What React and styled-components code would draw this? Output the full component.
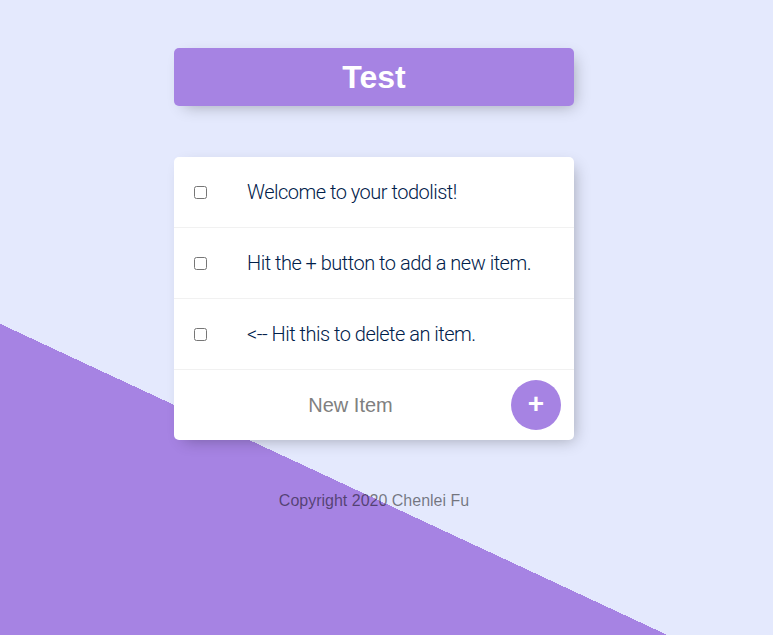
import styled, { createGlobalStyle } from "styled-components";

const GlobalStyle = createGlobalStyle`
  html {
    background-color: #E4E9FD;
    background-image: linear-gradient(25deg, #A683E3 50%, #E4E9FD 50%);
    min-height: 1008px;
    overflow: hidden;
    font-family: "Liberation Sans", Arial, sans-serif;
  }
  body {
    margin: 0;
  }
`;

const Page = styled.div`
  width: 748px;
  padding-top: 48px;
`;

const Box = styled.div`
  max-width: 400px;
  margin: 0 auto 51px;
  background: ${(p) => (p.$heading ? "#A683E3" : "#fff")};
  text-align: ${(p) => (p.$heading ? "center" : "left")};
  border-radius: 5px;
  box-shadow: 5px 5px 15px -5px rgba(0, 0, 0, 0.3);
`;

const Title = styled.h1`
  margin: 0;
  padding: 10px;
  color: #fff;
  font-size: 32px;
  line-height: 38px;
  font-weight: 700;
`;

const Item = styled.div`
  min-height: 70px;
  display: flex;
  align-items: center;
  border-bottom: 1px solid #F1F1F1;
`;

const Check = styled.input`
  margin: 20px;
  width: 13px;
  height: 13px;
`;

const Text = styled.p`
  margin: 0;
  padding: 20px;
  font-family: Roboto, "Liberation Sans", sans-serif;
  font-size: 20px;
  font-weight: 300;
  letter-spacing: -0.5px;
  color: #00204a;
`;

const Form = styled.form`
  display: flex;
  align-items: center;
  height: 70px;
  margin-left: 20px;
  gap: 4px;
`;

const NewItem = styled.input`
  text-align: center;
  height: 60px;
  width: 313px;
  padding: 0;
  border: none;
  background: transparent;
  font-family: "Liberation Sans", Arial, sans-serif;
  font-size: 20px;
  &::placeholder {
    color: grey;
    opacity: 1;
  }
  &:focus {
    outline: none;
    box-shadow: inset 0 -3px 0 0 #A683E3;
  }
`;

const AddButton = styled.button`
  display: flex;
  align-items: center;
  justify-content: center;
  height: 50px;
  width: 50px;
  border-radius: 50%;
  border: 0;
  padding: 0 0 2px;
  background-color: #A683E3;
  color: #fff;
  font-family: "Liberation Sans", Arial, sans-serif;
  font-size: 28px;
  font-weight: 700;
  line-height: 1;
  cursor: pointer;
`;

const Footer = styled.footer`
  text-align: center;
  color: rgba(0, 0, 0, 0.5);
  font-size: 16px;
  line-height: 18px;
  padding-top: 1px;
`;

const items = [
  "Welcome to your todolist!",
  "Hit the + button to add a new item.",
  "<-- Hit this to delete an item.",
];

export default function App() {
  return (
    <>
      <GlobalStyle />
      <Page>
        <Box $heading>
          <Title>Test</Title>
        </Box>
        <Box>
          {items.map((text) => (
            <Item key={text}>
              <Check type="checkbox" />
              <Text>{text}</Text>
            </Item>
          ))}
          <Form onSubmit={(e) => e.preventDefault()}>
            <NewItem type="text" placeholder="New Item" autoComplete="off" />
            <AddButton type="submit">+</AddButton>
          </Form>
        </Box>
        <Footer>Copyright 2020 Chenlei Fu</Footer>
      </Page>
    </>
  );
}
